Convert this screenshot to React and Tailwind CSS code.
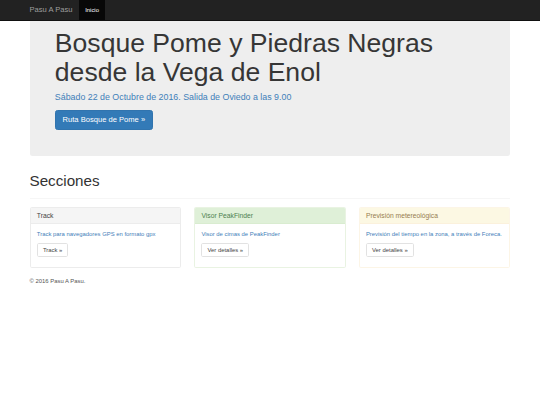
import React from "react";

const panels = [
  {
    title: "Track",
    text: "Track para navegadores GPS en formato gpx",
    button: "Track »",
    border: "border-[#ececec]",
    head: "bg-[#f5f5f5] text-[#444] border-[#ececec]",
  },
  {
    title: "Visor PeakFinder",
    text: "Visor de cimas de PeakFinder",
    button: "Ver detalles »",
    border: "border-[#e9f3e2]",
    head: "bg-[#dff0d8] text-[#4d8150] border-[#d9ecd0]",
  },
  {
    title: "Previsión metereológica",
    text: "Previsión del tiempo en la zona, a través de Foreca.",
    button: "Ver detalles »",
    border: "border-[#fcf5e6]",
    head: "bg-[#fcf8e3] text-[#977d50] border-[#fbf1dc]",
  },
];

const Panel = ({ p }) => (
  <div className={`border ${p.border} rounded-[1.69px] bg-white mb-[8.44px] overflow-hidden`}>
    <div className={`px-[6.33px] py-[3.65px] border-b ${p.head}`}>
      <h3 className="text-[6.75px] leading-[7.43px] font-normal">{p.title}</h3>
    </div>
    <div className="px-[6.33px] pt-[6.33px] pb-[5.8px]">
      <p className="text-[5.9px] leading-[8.44px] text-[#3f80b9] mb-[4.22px]">{p.text}</p>
      <div className="flex mb-[4.22px]">
        <a className="text-[5.9px] leading-[8.44px] px-[5.06px] py-[1.94px] border border-[#e2e2e2] rounded-[1.69px] bg-white text-[#444]">
          {p.button}
        </a>
      </div>
    </div>
  </div>
);

export default function App() {
  return (
    <div className="min-h-screen bg-white text-[#333] font-['Liberation_Sans',Arial,sans-serif]">
      <nav className="h-[21px] bg-[#222] border-b border-[#111]">
        <div className="mx-auto w-[493.6px] h-full flex">
          <a className="px-[6.33px] flex items-center text-[7.59px] text-[#9d9d9d]">Pasu A Pasu</a>
          <a className="px-[6.33px] flex items-center text-[5.9px] text-white bg-[#080808]">Inicio</a>
        </div>
      </nav>

      <div className="mx-auto w-[493.6px] px-[6.33px]">
        <div className="bg-[#eee] rounded-b-[2.53px] px-[25.31px] pt-[7.7px] pb-[20.25px]">
          <h1 className="text-[26.58px] leading-[29.24px] mb-[4.22px] font-normal text-[#363636]">
            Bosque Pome y Piedras Negras desde la Vega de Enol
          </h1>
          <p className="text-[8.86px] leading-[12.66px] text-[#3f80b9] mb-[6.33px]">
            Sábado 22 de Octubre de 2016. Salida de Oviedo a las 9.00
          </p>
          <div className="flex mb-[6.33px]">
            <a className="text-[7.59px] leading-[10.12px] px-[6.75px] py-[3.64px] border border-[#3174ae] bg-[#337ab7] text-white rounded-[2.53px]">
              Ruta Bosque de Pome »
            </a>
          </div>
        </div>

        <div className="mt-[16.88px] pb-[3.8px] border-b border-[#f6f6f6] mb-[8.44px]">
          <h1 className="text-[15.19px] leading-[16.71px] mb-[4.22px] font-normal">Secciones</h1>
        </div>

        <div className="grid grid-cols-3 gap-x-[12.66px]">
          {panels.map((p) => (
            <Panel key={p.title} p={p} />
          ))}
        </div>

        <footer>
          <p className="text-[5.9px] leading-[8.44px] text-[#555]">© 2016 Pasu A Pasu.</p>
        </footer>
      </div>
    </div>
  );
}
